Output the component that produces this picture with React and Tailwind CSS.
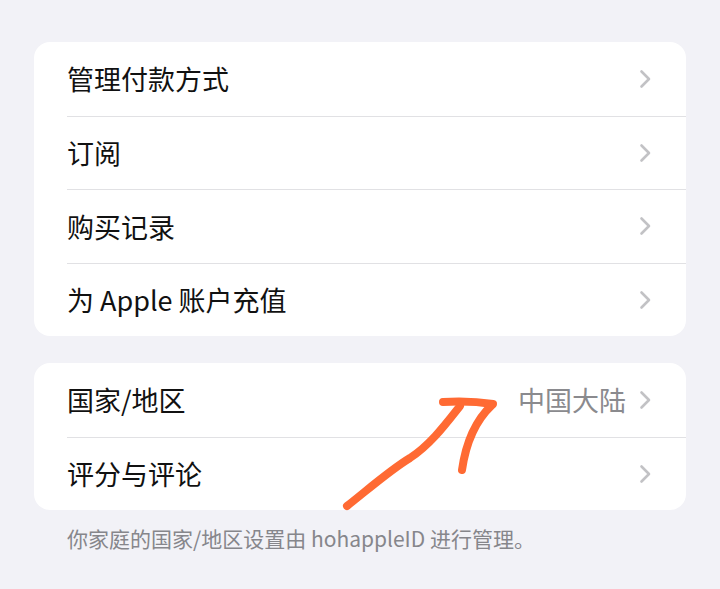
import React from "react";

const font = { fontFamily: '"Noto Sans CJK SC", "Noto Sans", sans-serif' };

function Chevron() {
  return (
    <svg width="13" height="20" viewBox="0 0 13 20" className="shrink-0">
      <polyline
        points="2.5,2.5 10,10 2.5,17.5"
        fill="none"
        stroke="#c2c2c5"
        strokeWidth="2.6"
        strokeLinecap="round"
        strokeLinejoin="round"
      />
    </svg>
  );
}

function Row({ label, value, first }) {
  return (
    <div className="pl-[33px]">
      <div
        className={`flex items-center h-[73.5px] pr-[34px] ${first ? "" : "border-t border-[#e1e1e4]"}`}
      >
        <span className="flex-1 text-[27px] text-[#111] leading-none">{label}</span>
        {value && (
          <span className="text-[27px] text-[#8a8a8e] leading-none mr-[13px]">{value}</span>
        )}
        <Chevron />
      </div>
    </div>
  );
}

function Card({ items }) {
  return (
    <div className="bg-white rounded-[16px] overflow-hidden">
      {items.map((it, i) => (
        <Row key={it.label} label={it.label} value={it.value} first={i === 0} />
      ))}
    </div>
  );
}

export default function App() {
  return (
    <div className="relative w-[720px] h-[589px] bg-[#f2f2f7] overflow-hidden" style={font}>
      <div className="px-[34px] pt-[42px] flex flex-col gap-[27px]">
        <Card
          items={[
            { label: "管理付款方式" },
            { label: "订阅" },
            { label: "购买记录" },
            { label: "为 Apple 账户充值" },
          ]}
        />
        <div>
          <Card items={[{ label: "国家/地区", value: "中国大陆" }, { label: "评分与评论" }]} />
          <p className="pl-[33px] pt-[18px] text-[21px] text-[#86868b] leading-none">
            你家庭的国家/地区设置由 hohappleID 进行管理。
          </p>
        </div>
      </div>
      <svg className="absolute left-0 top-0 pointer-events-none" width="720" height="589">
        <g fill="none" stroke="#ff6a33" strokeWidth="8" strokeLinecap="round" strokeLinejoin="round">
          <path d="M347 506 C 365 492, 390 470, 410 458 C 430 445, 445 425, 460 406" />
          <path d="M443 402 C 460 401, 480 402, 493 404" />
          <path d="M492 405 C 476 420, 466 442, 462 470" />
        </g>
      </svg>
    </div>
  );
}
